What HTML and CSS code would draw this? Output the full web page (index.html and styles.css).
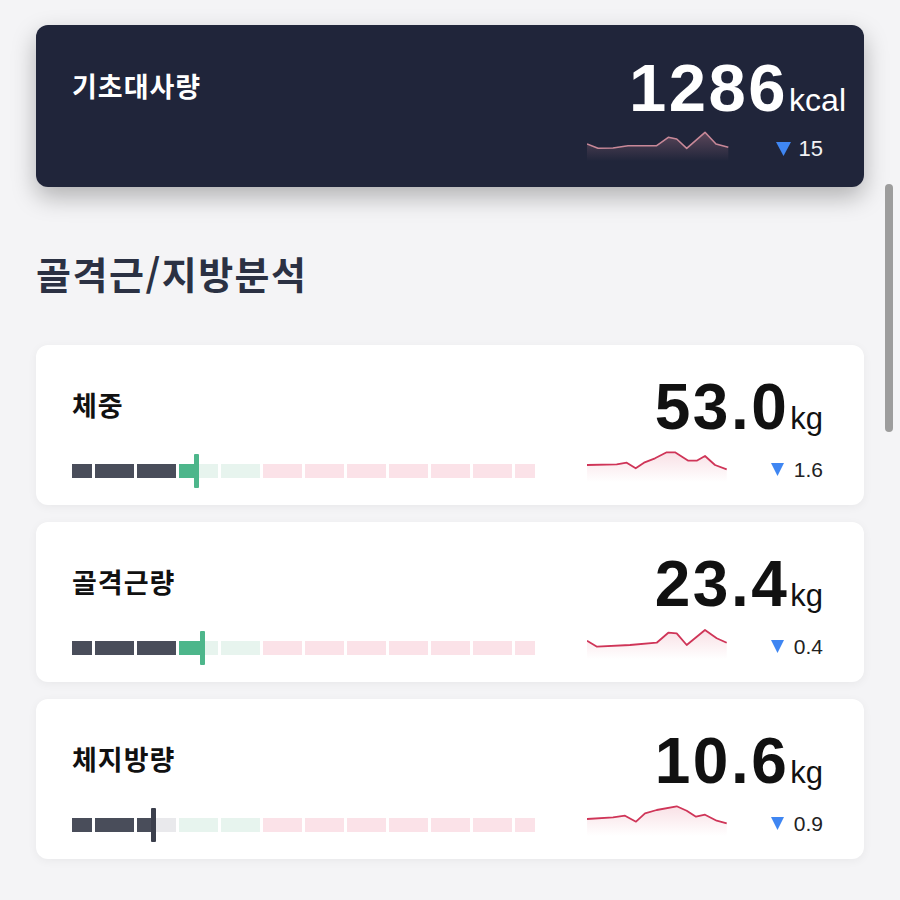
FILE: index.html
```html
<!DOCTYPE html>
<html lang="ko">
<head>
  <meta charset="UTF-8">
  <title>체성분</title>
  <meta name="viewport" content="width=device-width, initial-scale=1.0">
  <link rel="stylesheet" href="styles.css">
</head>
<body>
  <div class="container">

    <!-- 기초대사량 -->
    <div class="bmr-card">
      <div class="metric-left">
        <div class="metric-name">기초대사량</div>
      </div>
      <div class="metric-right">
        <div class="metric-value bmr-value">1286<span class="unit">kcal</span></div>
        <div class="spark-row">
          <svg class="spark" width="142" height="36" viewBox="0 0 142 36">
            <defs>
              <linearGradient id="fadeDark" x1="0" y1="0" x2="0" y2="1">
                <stop offset="0" stop-color="#c98596" stop-opacity="0.35"/>
                <stop offset="1" stop-color="#c98596" stop-opacity="0"/>
              </linearGradient>
            </defs>
            <polygon fill="url(#fadeDark)" points="0,17 11,21.3 26,21 41,18.7 69.7,18.7 81.3,10.3 89.7,12 99.7,21.3 118,5.3 129,17 141.3,20.3 141.3,34 0,34"/>
            <polyline fill="none" stroke="#c88898" stroke-width="1.6" stroke-linejoin="round" points="0,17 11,21.3 26,21 41,18.7 69.7,18.7 81.3,10.3 89.7,12 99.7,21.3 118,5.3 129,17 141.3,20.3"/>
          </svg>
          <div class="trend trend-dark">
            <svg class="tri tri-big" width="15" height="14" viewBox="0 0 15 14"><polygon points="0,0 15,0 7.5,14" fill="#3f86f2"/></svg>
            <span>15</span>
          </div>
        </div>
      </div>
    </div>

    <h2 class="section-title">골격근/지방분석</h2>

    <!-- 체중 -->
    <div class="metric-card">
      <div class="metric-left">
        <div class="metric-name">체중</div>
        <div class="gauge">
          <div class="seg half under"></div>
          <div class="seg under"></div>
          <div class="seg under"></div>
          <div class="seg normal"><div class="seg-fill fill-green" style="width: 17px"></div></div>
          <div class="seg normal"></div>
          <div class="seg over"></div>
          <div class="seg over"></div>
          <div class="seg over"></div>
          <div class="seg over"></div>
          <div class="seg over"></div>
          <div class="seg over"></div>
          <div class="seg half over"></div>
          <div class="marker marker-green" style="left: 122px"></div>
        </div>
      </div>
      <div class="metric-right">
        <div class="metric-value">53.0<span class="unit">kg</span></div>
        <div class="spark-row">
          <svg class="spark" width="142" height="36" viewBox="0 0 142 36">
            <defs>
              <linearGradient id="fade1" x1="0" y1="0" x2="0" y2="1">
                <stop offset="0" stop-color="#d8405f" stop-opacity="0.16"/>
                <stop offset="1" stop-color="#d8405f" stop-opacity="0"/>
              </linearGradient>
            </defs>
            <polygon fill="url(#fade1)" points="0,17 29.7,16.3 39.7,14.7 48.7,20.3 57,14.7 68,10.3 79.7,4.3 88,4.3 101.3,12.7 109.7,12.7 118,8 128,17 139.7,21.3 139.7,34 0,34"/>
            <polyline fill="none" stroke="#cf3558" stroke-width="1.8" stroke-linejoin="round" points="0,17 29.7,16.3 39.7,14.7 48.7,20.3 57,14.7 68,10.3 79.7,4.3 88,4.3 101.3,12.7 109.7,12.7 118,8 128,17 139.7,21.3"/>
          </svg>
          <div class="trend">
            <svg class="tri" width="13" height="13" viewBox="0 0 13 13"><polygon points="0,0 13,0 6.5,13" fill="#3f86f2"/></svg>
            <span>1.6</span>
          </div>
        </div>
      </div>
    </div>

    <!-- 골격근량 -->
    <div class="metric-card">
      <div class="metric-left">
        <div class="metric-name">골격근량</div>
        <div class="gauge">
          <div class="seg half under"></div>
          <div class="seg under"></div>
          <div class="seg under"></div>
          <div class="seg normal"><div class="seg-fill fill-green" style="width: 21px"></div></div>
          <div class="seg normal"></div>
          <div class="seg over"></div>
          <div class="seg over"></div>
          <div class="seg over"></div>
          <div class="seg over"></div>
          <div class="seg over"></div>
          <div class="seg over"></div>
          <div class="seg half over"></div>
          <div class="marker marker-green" style="left: 128px"></div>
        </div>
      </div>
      <div class="metric-right">
        <div class="metric-value">23.4<span class="unit">kg</span></div>
        <div class="spark-row">
          <svg class="spark" width="142" height="36" viewBox="0 0 142 36">
            <defs>
              <linearGradient id="fade2" x1="0" y1="0" x2="0" y2="1">
                <stop offset="0" stop-color="#d8405f" stop-opacity="0.16"/>
                <stop offset="1" stop-color="#d8405f" stop-opacity="0"/>
              </linearGradient>
            </defs>
            <polygon fill="url(#fade2)" points="0,15.7 10,21.7 43,20 69.7,17.7 81.3,7.7 89.7,8.3 99.7,20 118,5 129.7,13.3 139.7,17.7 139.7,34 0,34"/>
            <polyline fill="none" stroke="#cf3558" stroke-width="1.8" stroke-linejoin="round" points="0,15.7 10,21.7 43,20 69.7,17.7 81.3,7.7 89.7,8.3 99.7,20 118,5 129.7,13.3 139.7,17.7"/>
          </svg>
          <div class="trend">
            <svg class="tri" width="13" height="13" viewBox="0 0 13 13"><polygon points="0,0 13,0 6.5,13" fill="#3f86f2"/></svg>
            <span>0.4</span>
          </div>
        </div>
      </div>
    </div>

    <!-- 체지방량 -->
    <div class="metric-card">
      <div class="metric-left">
        <div class="metric-name">체지방량</div>
        <div class="gauge">
          <div class="seg half under"></div>
          <div class="seg under"></div>
          <div class="seg empty"><div class="seg-fill fill-dark" style="width: 16px"></div></div>
          <div class="seg normal"></div>
          <div class="seg normal"></div>
          <div class="seg over"></div>
          <div class="seg over"></div>
          <div class="seg over"></div>
          <div class="seg over"></div>
          <div class="seg over"></div>
          <div class="seg over"></div>
          <div class="seg half over"></div>
          <div class="marker marker-dark" style="left: 79px"></div>
        </div>
      </div>
      <div class="metric-right">
        <div class="metric-value">10.6<span class="unit">kg</span></div>
        <div class="spark-row">
          <svg class="spark" width="142" height="36" viewBox="0 0 142 36">
            <defs>
              <linearGradient id="fade3" x1="0" y1="0" x2="0" y2="1">
                <stop offset="0" stop-color="#d8405f" stop-opacity="0.16"/>
                <stop offset="1" stop-color="#d8405f" stop-opacity="0"/>
              </linearGradient>
            </defs>
            <polygon fill="url(#fade3)" points="0,17 26,15.3 38,13.7 49,19.7 58,11.3 69.7,8 89.7,4.3 99.7,8.7 109,14.7 118,12.7 129.7,18.7 139.7,21.3 139.7,34 0,34"/>
            <polyline fill="none" stroke="#cf3558" stroke-width="1.8" stroke-linejoin="round" points="0,17 26,15.3 38,13.7 49,19.7 58,11.3 69.7,8 89.7,4.3 99.7,8.7 109,14.7 118,12.7 129.7,18.7 139.7,21.3"/>
          </svg>
          <div class="trend">
            <svg class="tri" width="13" height="13" viewBox="0 0 13 13"><polygon points="0,0 13,0 6.5,13" fill="#3f86f2"/></svg>
            <span>0.9</span>
          </div>
        </div>
      </div>
    </div>

  </div>

  <div class="scroll-thumb"></div>
</body>
</html>
```

FILE: styles.css
```css
body {
  font-family: "Liberation Sans", "Noto Sans CJK KR", sans-serif;
  background-color: #f4f4f6;
  margin: 0;
  padding: 0;
  color: #111;
}
.container {
  width: 828px;
  padding: 25px 0 0 36px;
}

/* Cards */
.bmr-card,
.metric-card {
  display: grid;
  grid-template-columns: 1fr 236px;
  border-radius: 12px;
  padding: 0 41px 0 36px;
  box-sizing: border-box;
}
.bmr-card {
  height: 162px;
  background-color: #20253a;
  color: white;
  box-shadow: 0 10px 24px rgba(0, 0, 0, 0.28);
}
.metric-card {
  height: 160px;
  background-color: white;
  box-shadow: 0 2px 10px rgba(0, 0, 0, 0.05);
  margin-bottom: 17px;
}

.metric-name {
  font-family: "Noto Sans CJK KR", sans-serif;
  font-size: 27px;
  font-weight: 700;
  line-height: 30px;
  letter-spacing: 1px;
  margin-top: 45px;
}
.bmr-card .metric-name {
  margin-top: 46px;
}

.section-title {
  font-family: "Noto Sans CJK KR", sans-serif;
  font-size: 38px;
  font-weight: 700;
  line-height: 44px;
  letter-spacing: 1.5px;
  color: #2b3143;
  margin: 64px 0 50px 0;
}

/* Value + sparkline */
.metric-right {
  display: flex;
  flex-direction: column;
}
.metric-value {
  font-size: 64px;
  font-weight: 700;
  line-height: 64px;
  letter-spacing: 2.5px;
  text-align: right;
  margin-top: 30px;
  white-space: nowrap;
}
.bmr-value {
  font-size: 67px;
  line-height: 67px;
  letter-spacing: 2.5px;
  margin-top: 29px;
  margin-right: -23px;
}
.unit {
  font-size: 31px;
  font-weight: 400;
  line-height: 1;
  letter-spacing: 0;
  margin-left: 1px;
}
.bmr-value .unit {
  font-size: 32px;
}

.spark-row {
  display: flex;
  justify-content: space-between;
  align-items: flex-end;
  margin-top: 9px;
  height: 36px;
}
.bmr-card .spark-row {
  margin-top: 6px;
}
.spark {
  display: block;
}
.trend {
  display: flex;
  align-items: center;
  gap: 10px;
  font-size: 21px;
  line-height: 21px;
  color: #222;
  margin-bottom: 4px;
}
.trend-dark {
  font-size: 22px;
  line-height: 22px;
  color: #f2f2f5;
  gap: 8px;
  margin-bottom: 3px;
}
.tri {
  display: block;
}

/* Gauge */
.gauge {
  position: relative;
  display: flex;
  align-items: center;
  gap: 3px;
  height: 34px;
  margin-top: 34px;
}
.seg {
  width: 39px;
  height: 14px;
  overflow: hidden;
}
.seg.half {
  width: 20px;
}
.seg.under { background-color: #494d5a; }
.seg.empty { background-color: #e9e9ec; }
.seg.normal { background-color: #e7f4ee; }
.seg.over { background-color: #fbe2e8; }
.seg-fill {
  height: 14px;
}
.fill-green { background-color: #4db68b; }
.fill-dark { background-color: #494d5a; }

.marker {
  position: absolute;
  top: 0;
  width: 5px;
  height: 34px;
  border-radius: 1px;
}
.marker-green { background-color: #4db68b; }
.marker-dark { background-color: #3b3f4c; }

/* overlay scrollbar */
.scroll-thumb {
  position: fixed;
  top: 184px;
  right: 7px;
  width: 8px;
  height: 248px;
  border-radius: 4px;
  background-color: #9d9d9d;
}
```
